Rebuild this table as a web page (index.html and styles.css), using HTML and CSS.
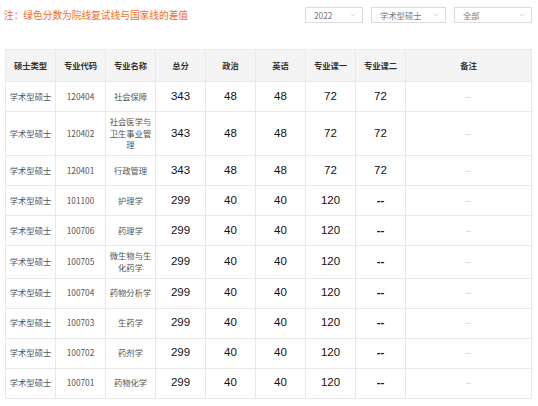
FILE: index.html
```html
<!DOCTYPE html>
<html lang="zh">
<head>
<meta charset="utf-8">
<link rel="stylesheet" href="styles.css">
</head>
<body>
<div class="page">
  <div class="topbar">
    <div class="note">注：绿色分数为院线复试线与国家线的差值</div>
    <div class="filters">
      <div class="select s1"><span>2022</span><svg class="chev" viewBox="0 0 8 5"><path d="M0.5 0.5 L4 4 L7.5 0.5" fill="none" stroke="#c4c4c4" stroke-width="0.9"/></svg></div>
      <div class="select s2"><span>学术型硕士</span><svg class="chev" viewBox="0 0 8 5"><path d="M0.5 0.5 L4 4 L7.5 0.5" fill="none" stroke="#c4c4c4" stroke-width="0.9"/></svg></div>
      <div class="select s3"><span>全部</span><svg class="chev" viewBox="0 0 8 5"><path d="M0.5 0.5 L4 4 L7.5 0.5" fill="none" stroke="#c4c4c4" stroke-width="0.9"/></svg></div>
    </div>
  </div>
  <table class="grid">
    <colgroup>
      <col class="c"><col class="c"><col class="c"><col class="c"><col class="c"><col class="c"><col class="c"><col class="c"><col>
    </colgroup>
    <thead>
      <tr><th>硕士类型</th><th>专业代码</th><th>专业名称</th><th>总分</th><th>政治</th><th>英语</th><th>专业课一</th><th>专业课二</th><th>备注</th></tr>
    </thead>
    <tbody>
      <tr><td>学术型硕士</td><td>120404</td><td>社会保障</td><td class="n">343</td><td class="n">48</td><td class="n">48</td><td class="n">72</td><td class="n">72</td><td class="r">--</td></tr>
      <tr><td>学术型硕士</td><td>120402</td><td class="w">社会医学与卫生事业管理</td><td class="n">343</td><td class="n">48</td><td class="n">48</td><td class="n">72</td><td class="n">72</td><td class="r">--</td></tr>
      <tr><td>学术型硕士</td><td>120401</td><td>行政管理</td><td class="n">343</td><td class="n">48</td><td class="n">48</td><td class="n">72</td><td class="n">72</td><td class="r">--</td></tr>
      <tr><td>学术型硕士</td><td>101100</td><td>护理学</td><td class="n">299</td><td class="n">40</td><td class="n">40</td><td class="n">120</td><td class="n d">--</td><td class="r">--</td></tr>
      <tr><td>学术型硕士</td><td>100706</td><td>药理学</td><td class="n">299</td><td class="n">40</td><td class="n">40</td><td class="n">120</td><td class="n d">--</td><td class="r">--</td></tr>
      <tr><td>学术型硕士</td><td>100705</td><td class="w">微生物与生化药学</td><td class="n">299</td><td class="n">40</td><td class="n">40</td><td class="n">120</td><td class="n d">--</td><td class="r">--</td></tr>
      <tr><td>学术型硕士</td><td>100704</td><td>药物分析学</td><td class="n">299</td><td class="n">40</td><td class="n">40</td><td class="n">120</td><td class="n d">--</td><td class="r">--</td></tr>
      <tr><td>学术型硕士</td><td>100703</td><td>生药学</td><td class="n">299</td><td class="n">40</td><td class="n">40</td><td class="n">120</td><td class="n d">--</td><td class="r">--</td></tr>
      <tr><td>学术型硕士</td><td>100702</td><td>药剂学</td><td class="n">299</td><td class="n">40</td><td class="n">40</td><td class="n">120</td><td class="n d">--</td><td class="r">--</td></tr>
      <tr><td>学术型硕士</td><td>100701</td><td>药物化学</td><td class="n">299</td><td class="n">40</td><td class="n">40</td><td class="n">120</td><td class="n d">--</td><td class="r">--</td></tr>
    </tbody>
  </table>
</div>
</body>
</html>
```
FILE: styles.css
```css
html, body {
  margin: 0;
  padding: 0;
  background: #fff;
}
body {
  font-family: "Noto Sans CJK SC", "Noto Sans", sans-serif;
  color: #555;
}
.page {
  padding: 7px 6px 0 5px;
}
.topbar {
  display: flex;
  justify-content: space-between;
  align-items: center;
  height: 16px;
  margin-bottom: 26px;
}
.note {
  color: #f26b1d;
  font-size: 9.7px;
  line-height: 16px;
  margin-left: -1px;
}
.filters {
  display: flex;
  gap: 8px;
}
.select {
  box-sizing: border-box;
  height: 16px;
  border: 1px solid #dcdcdc;
  display: flex;
  align-items: center;
  justify-content: space-between;
  padding: 0 6px 0 8px;
  font-size: 8.3px;
  color: #777;
  font-family: "Noto Sans CJK SC", "Liberation Sans", sans-serif;
}
.s1 { width: 58px; }
.s2 { width: 75px; }
.s3 { width: 78px; }
.chev {
  width: 6px;
  height: 4px;
}
.grid {
  border-collapse: collapse;
  table-layout: fixed;
  width: 527px;
}
.grid col.c {
  width: 50px;
}
.grid th, .grid td {
  border: 1px solid #e9e9e9;
  text-align: center;
  vertical-align: middle;
  padding: 4px 3.5px;
  font-size: 8.3px;
  line-height: 11.7px;
}
.grid th {
  background: #f4f4f4;
  color: #333;
  font-weight: bold;
  height: 23px;
}
.grid td {
  height: 21px;
  color: #555;
}
.grid td.w {
  word-break: break-all;
  line-break: anywhere;
}
.grid td.n {
  font-family: "Liberation Sans", Arial, sans-serif;
  font-size: 11.5px;
  color: #111;
}
.grid td.d {
  font-weight: bold;
}
.grid td.r {
  color: #b5b5b5;
  font-family: "Liberation Sans", Arial, sans-serif;
  font-size: 7.5px;
}
```
